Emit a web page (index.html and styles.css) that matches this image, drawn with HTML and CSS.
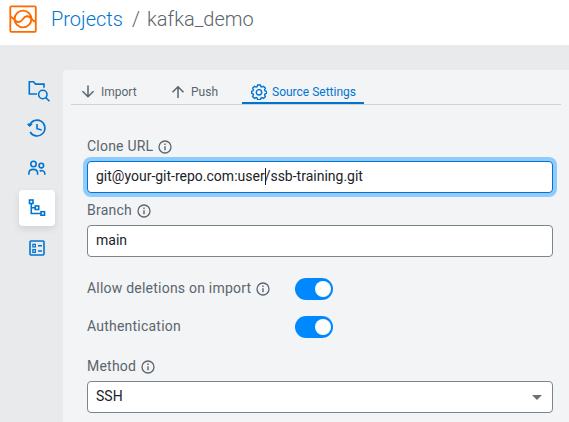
FILE: index.html
```html
<!DOCTYPE html>
<html lang="en">
<head>
<meta charset="utf-8">
<title>Projects / kafka_demo</title>
<link rel="stylesheet" href="styles.css">
</head>
<body>
<svg class="defs" width="0" height="0" aria-hidden="true">
  <symbol id="info" viewBox="0 0 14 14">
    <circle cx="7" cy="7" r="6" fill="none" stroke="currentColor" stroke-width="1.3"/>
    <path d="M7 6.3v4M7 3.6v1.4" fill="none" stroke="currentColor" stroke-width="1.4"/>
  </symbol>
</svg>
<header class="header">
  <svg class="logo" viewBox="0 0 28 28" fill="none" stroke="#ff6a00">
    <rect x="1.300" y="1.300" width="25.5" height="25.5" rx="1" stroke-width="1.800"/>
    <circle cx="14" cy="14" r="8.4" stroke-width="1.900"/>
    <path d="M1 11.700c2 .2 3.200 1.500 4.600 3.200 2.800 3.600 6 2.200 8.200-.7 2.200-3 5.400-4.500 8.200-.9 1.400 1.700 2.500 3 4.500 3.200" stroke-width="1.900"/>
  </svg>
  <nav class="crumbs"><a class="crumb-link">Projects</a><span class="slash">/</span><span class="crumb-name">kafka_demo</span></nav>
</header>
<div class="layout">
  <aside class="sidebar">
    <a class="side-item"><svg viewBox="0 0 24 24"><path d="M12 18H4.300V5.800h4.200l2 2.300h8.500v3.700"/><circle cx="17.800" cy="18.500" r="4.200"/><path d="M20.800 21.600l3.700 3.600"/></svg></a>
    <a class="side-item"><svg viewBox="0 0 24 24"><path d="M4.600 9.400A7.900 7.900 0 1 1 5.200 16"/><path d="M2.600 8l1.800 2.500 2.800-2.300z" fill="currentColor" stroke-width="1"/><path d="M12 8v4.700l4.700 1.300"/></svg></a>
    <a class="side-item"><svg viewBox="0 0 24 24"><circle cx="8.500" cy="8" r="2.700"/><circle cx="16.300" cy="9.600" r="2.300"/><path d="M3.900 18.800v-1.300c0-5.500 8.700-5.500 8.700 0v1.300M14.600 15.200c2.200-1.400 5.200-.2 5.200 2.300v1.300"/></svg></a>
    <a class="side-item active"><svg viewBox="0 0 24 24"><rect x="4.500" y="4" width="3.500" height="3.500"/><rect x="10.200" y="10" width="3.500" height="3.500"/><rect x="16" y="15.700" width="3.500" height="3.500"/><path d="M6.300 7.500v10H16M6.300 11.800h4"/></svg></a>
    <a class="side-item"><svg viewBox="0 0 24 24"><rect x="5" y="5" width="14" height="14" rx="1"/><path d="M7.800 8.300h2.600v2.600H7.800zM7.800 13.700h2.600v2.600H7.800z" stroke-width="1.200"/><path d="M13 9.700h4M13 15h4"/></svg></a>
  </aside>
  <main class="panel">
    <div class="tabs">
      <a class="tab import"><svg viewBox="0 0 14 14"><path d="M7 .5v11M1.500 6.300L7 11.800l5.500-5.500"/></svg>Import</a>
      <a class="tab push"><svg viewBox="0 0 14 14"><path d="M7 13V2M1.500 7.200L7 1.700l5.500 5.500"/></svg>Push</a>
      <a class="tab selected"><svg class="gear" viewBox="0 0 16 16"><path d="M6.600 1h2.800l.5 1.700 1 .4 1.600-.8 1.900 1.900-.8 1.600.4 1 1.700.5v2l-1.700.6-.4 1 .8 1.600-1.900 1.900-1.600-.8-1 .4-.5 1.700H6.600L6.100 14l-1-.4-1.600.8-1.900-1.900.8-1.600-.4-1L.6 9.300v-2l1.400-.5.4-1-.8-1.600 1.900-1.900 1.600.8 1-.4z"/><circle cx="8" cy="8.300" r="2.700"/></svg>Source Settings</a>
    </div>
    <form class="form">
      <div class="label">Clone URL<svg class="info"><use href="#info"/></svg></div>
      <div class="field focused">git@your-git-repo.com:user<i class="caret"></i>/ssb-training.git</div>
      <div class="label">Branch<svg class="info"><use href="#info"/></svg></div>
      <div class="field">main</div>
      <div class="switch-row first"><span class="label">Allow deletions on import<svg class="info"><use href="#info"/></svg></span><span class="toggle"></span></div>
      <div class="switch-row"><span class="label">Authentication</span><span class="toggle"></span></div>
      <div class="label method">Method<svg class="info"><use href="#info"/></svg></div>
      <div class="field select">SSH<span class="arrow"></span></div>
    </form>
  </main>
</div>
</body>
</html>
```
FILE: styles.css
```css
* { box-sizing: border-box; }
body {
  margin: 0;
  height: 422px;
  overflow: hidden;
  background: #e9eaeb;
  color: #1b2329;
  font: 14px/20px Roboto, sans-serif;
}
.defs { display: block; }
.header {
  display: flex;
  height: 45px;
  padding: 5px 9px;
  background: #fff;
}
.logo { width: 28px; height: 28px; }
.crumbs {
  display: flex;
  margin-left: 14px;
  font-size: 20px;
  line-height: 28px;
  font-weight: 300;
  color: #5a656d;
}
.crumb-link { width: 81px; color: #0074d2; }
.slash { width: 15px; }
.layout { display: flex; height: 377px; }
.sidebar {
  display: flex;
  flex-direction: column;
  gap: 4px;
  width: 63px;
  padding: 25px 8px 0 19px;
}
.side-item {
  display: flex;
  align-items: center;
  justify-content: center;
  height: 36px;
  border-radius: 4px;
  color: #0074d2;
}
.side-item svg {
  width: 24px;
  height: 24px;
  overflow: visible;
  fill: none;
  stroke: currentColor;
  stroke-width: 1.6;
}
.active { background: #fff; box-shadow: 0 3px 7px rgba(0, 0, 0, .1); }
.panel {
  flex: 1;
  margin-top: 25px;
  padding: 0 8px;
  background: #f3f4f6;
  border-top-left-radius: 4px;
}
.tabs {
  display: flex;
  height: 35px;
  border-bottom: 1px solid #d0d4d7;
}
.tab {
  display: flex;
  align-items: center;
  height: 34px;
  padding: 9px 0 0 10px;
  color: #5a656d;
  font-size: 12px;
}
.tab svg {
  width: 14px;
  height: 14px;
  margin-right: 6px;
  fill: none;
  stroke: currentColor;
  stroke-width: 1.5;
}
.import { width: 90px; }
.push { width: 81px; }
.tab .gear { width: 16px; height: 16px; margin-right: 5px; stroke-width: 1.4; }
.selected {
  width: 122px;
  padding: 9px 0 0 9px;
  color: #0074d2;
  box-shadow: inset 0 -2px #0074d2;
}
.form { padding: 31px 8px 0 16px; }
.label {
  display: flex;
  align-items: center;
  height: 20px;
  color: #5a656d;
  letter-spacing: .22px;
}
.info { width: 14px; height: 14px; margin: 1px 0 0 5px; }
.field {
  display: flex;
  align-items: center;
  height: 32px;
  margin: 5px 0 7px;
  padding: 0 10px 2px 8px;
  border: 1px solid #7b858c;
  border-radius: 4px;
  background: #fff;
}
.focused { border-color: #0074d2; box-shadow: 0 0 0 4px #8fcbfd; }
.caret { width: 1px; height: 17px; margin-right: -1px; background: #1b2329; }
.switch-row {
  display: flex;
  align-items: center;
  height: 22px;
  margin-bottom: 16px;
}
.first { margin-top: 21px; }
.switch-row .label { width: 208px; padding-bottom: 2px; }
.switch-row .info { margin-top: 2px; }
.toggle {
  width: 38px;
  height: 22px;
  padding: 3px 2px 3px 20px;
  border-radius: 11px;
  background: #0089ff;
}
.toggle::before {
  content: "";
  display: block;
  width: 16px;
  height: 16px;
  border-radius: 50%;
  background: #fff;
}
.method { margin-top: 18px; }
.select { justify-content: space-between; }
.arrow {
  margin-top: 2px;
  border: 5px solid transparent;
  border-top-color: #6b7073;
  border-bottom: 0;
}
```
